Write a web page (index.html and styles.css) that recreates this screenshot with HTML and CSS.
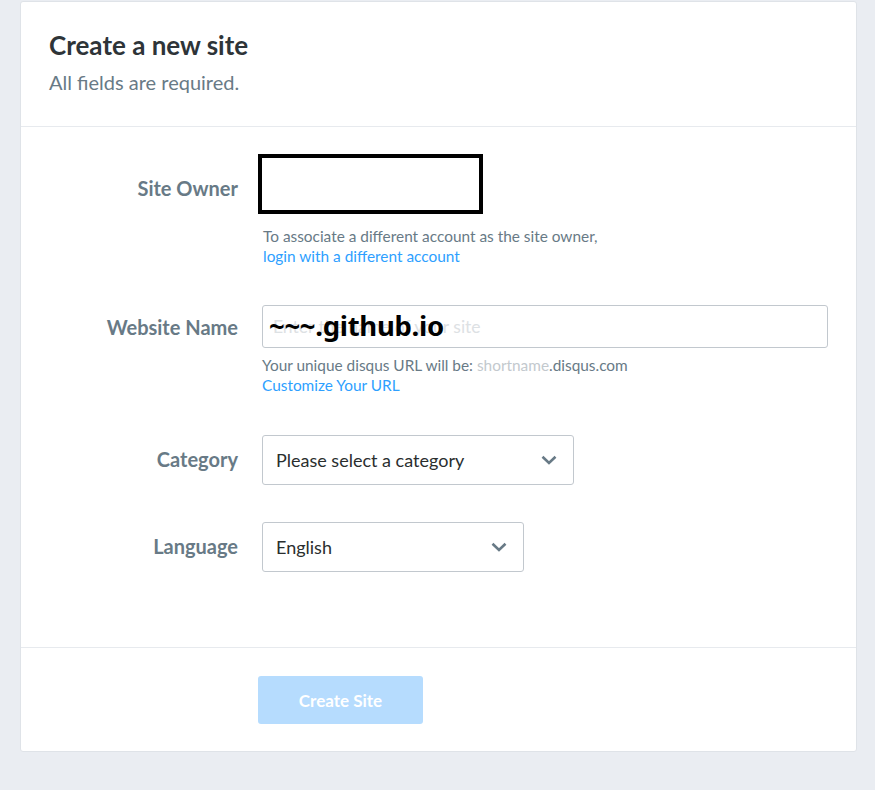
FILE: index.html
```html
<!DOCTYPE html>
<html>
<head>
<meta charset="utf-8">
<link rel="stylesheet" href="styles.css">
</head>
<body>
<div class="card">
  <div class="card-header">
    <h1 class="title">Create a new site</h1>
    <p class="subtitle">All fields are required.</p>
  </div>
  <div class="card-body">
    <div class="row">
      <label class="label label-owner">Site Owner</label>
      <div class="field">
        <div class="owner-box"></div>
        <div class="help help-owner">
          <div>To associate a different account as the site owner,</div>
          <a class="link" href="#">login with a different account</a>
        </div>
      </div>
    </div>
    <div class="row row-gap">
      <label class="label label-input">Website Name</label>
      <div class="field">
        <div class="input-wrap">
          <input class="text-input" type="text" placeholder="Enter the name of your site">
          <span class="overlay-text">~~~.github.io</span>
        </div>
        <div class="help help-url">
          <div>Your unique disqus URL will be: <span class="muted">shortname</span>.disqus.com</div>
          <a class="link" href="#">Customize Your URL</a>
        </div>
      </div>
    </div>
    <div class="row row-gap-lg">
      <label class="label label-select">Category</label>
      <div class="field">
        <div class="select select-category">
          <span>Please select a category</span>
          <svg class="chev" width="16" height="10" viewBox="0 0 16 10"><path d="M1.5 1.8 L8 8 L14.5 1.8" fill="none" stroke="#687a86" stroke-width="2.6"/></svg>
        </div>
      </div>
    </div>
    <div class="row row-gap-sm">
      <label class="label label-select">Language</label>
      <div class="field">
        <div class="select select-language">
          <span>English</span>
          <svg class="chev" width="16" height="10" viewBox="0 0 16 10"><path d="M1.5 1.8 L8 8 L14.5 1.8" fill="none" stroke="#687a86" stroke-width="2.6"/></svg>
        </div>
      </div>
    </div>
  </div>
  <div class="card-footer">
    <button class="btn" type="button">Create Site</button>
  </div>
</div>
</body>
</html>
```
FILE: styles.css
```css
* { box-sizing: border-box; }
html, body { margin: 0; padding: 0; }
body {
  background: #eaedf2;
  font-family: "Lato", "Noto Sans", sans-serif;
  color: #2a2e2e;
  height: 790px;
  overflow: hidden;
}
.card {
  margin: 1px 18px 0 20px;
  width: 837px;
  background: #fff;
  border: 1px solid #dfe3e8;
  border-radius: 3px;
}
.card-header {
  padding: 28px 28px 0 28px;
  height: 125px;
  border-bottom: 1px solid #e7eaee;
}
.title {
  margin: 0;
  font-size: 26px;
  font-weight: 700;
  line-height: 30px;
  color: #2e3438;
}
.subtitle {
  margin: 9px 0 0 0;
  font-size: 20px;
  line-height: 26px;
  color: #687a86;
}
.card-body {
  padding: 27px 0 75px 0;
  border-bottom: 1px solid #e7eaee;
}
.row {
  display: grid;
  grid-template-columns: 217px 1fr;
  column-gap: 24px;
}
.row-gap { margin-top: 39px; }
.row-gap-lg { margin-top: 40px; }
.row-gap-sm { margin-top: 37px; }
.label {
  text-align: right;
  font-size: 20px;
  font-weight: 700;
  color: #687a86;
  line-height: 24px;
}
.label-owner { padding-top: 22px; }
.label-input { padding-top: 10px; }
.label-select { padding-top: 12px; }
.field { min-width: 0; }
.owner-box {
  margin-left: -4px;
  width: 225px;
  height: 60px;
  border: 4px solid #000;
  background: #fff;
}
.help {
  font-size: 15.4px;
  line-height: 20px;
  color: #687a86;
}
.help-owner { margin-top: 12px; margin-left: 1px; }
.help-url { margin-top: 7px; }
.muted { color: #c3c9ce; }
.link { color: #2e9fff; text-decoration: none; }
.input-wrap {
  position: relative;
  width: 566px;
  height: 43px;
}
.text-input {
  width: 100%;
  height: 100%;
  border: 1px solid #c2c8ce;
  border-radius: 3px;
  padding: 0 10px;
  font-family: "Lato", "Noto Sans", sans-serif;
  font-size: 17.5px;
  color: #2a2e2e;
  background: #fff;
  outline: none;
}
.text-input::placeholder { color: #dde1e4; }
.overlay-text {
  position: absolute;
  left: 7px;
  top: 3px;
  font-family: "Noto Sans", "DejaVu Sans", sans-serif;
  font-size: 27.5px;
  font-weight: 700;
  line-height: 36px;
  color: #000;
  background: transparent;
  letter-spacing: -0.3px;
}
.select {
  display: flex;
  align-items: center;
  justify-content: space-between;
  height: 50px;
  border: 1px solid #c2c8ce;
  border-radius: 3px;
  padding: 0 16px 0 13px;
  font-size: 18px;
  color: #2a2e2e;
  background: #fff;
}
.select-category { width: 312px; }
.select-language { width: 262px; }
.chev { display: block; }
.card-footer {
  padding: 28px 0 27px 237px;
}
.btn {
  display: block;
  width: 165px;
  height: 48px;
  border: none;
  border-radius: 3px;
  background: #b6dcfe;
  color: #fff;
  font-family: "Lato", "Noto Sans", sans-serif;
  font-size: 17px;
  font-weight: 700;
  cursor: default;
}
```
